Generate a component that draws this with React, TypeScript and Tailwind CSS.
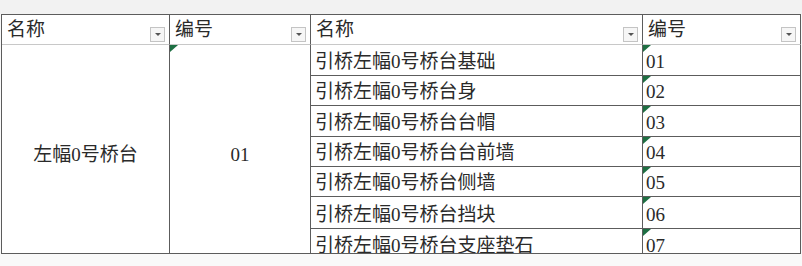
import React from 'react'

const rows = [
  { name: '引桥左幅0号桥台基础', code: '01' },
  { name: '引桥左幅0号桥台身', code: '02' },
  { name: '引桥左幅0号桥台台帽', code: '03' },
  { name: '引桥左幅0号桥台台前墙', code: '04' },
  { name: '引桥左幅0号桥台侧墙', code: '05' },
  { name: '引桥左幅0号桥台挡块', code: '06' },
  { name: '引桥左幅0号桥台支座垫石', code: '07' },
]

const font = { fontFamily: '"Liberation Serif", "Noto Sans CJK SC", serif' }

const FilterButton = () => (
  <div className="absolute right-[4px] bottom-[2px] w-[15px] h-[15px] border border-[#c4c4c4] bg-[#f6f6f6] flex items-center justify-center">
    <div className="w-0 h-0 border-l-[3px] border-r-[3px] border-t-[3px] border-l-transparent border-r-transparent border-t-[#555]" />
  </div>
)

const GreenMark = () => (
  <div className="absolute left-0 top-0 w-0 h-0 border-t-[7px] border-r-[8px] border-t-[#1e6f43] border-r-transparent" />
)

const HeaderCell = ({ label }: { label: string }) => (
  <div className="relative bg-white border-b border-b-[#c8c8c8] border-r border-r-[#5c5c5c] flex items-end pl-[5px] pb-[1px] text-[19px] leading-[26px] text-[#2a2a2a]">
    {label}
    <FilterButton />
  </div>
)

const App = () => {
  return (
    <div className="w-[802px] h-[266px] bg-[#f9f9f9] overflow-hidden" style={font}>
      <div className="h-[14px] bg-[#f2f2f2]" />
      <div className="ml-[1px] w-[800px] h-[240px] border-t border-l border-b border-[#5c5c5c] overflow-hidden bg-white">
        <div className="grid grid-cols-[168px_141px_332px_158px] grid-rows-[30px_31px_30px_31px_30px_30px_32px_31px]">
          <HeaderCell label="名称" />
          <HeaderCell label="编号" />
          <HeaderCell label="名称" />
          <HeaderCell label="编号" />

          <div className="row-span-7 col-start-1 row-start-2 border-r border-[#5c5c5c] flex items-center justify-center pt-[6px] text-[19px] text-[#2a2a2a]">
            左幅0号桥台
          </div>
          <div className="relative row-span-7 col-start-2 row-start-2 border-r border-[#5c5c5c] flex items-center justify-center pt-[6px] text-[19px] text-[#2a2a2a]">
            <GreenMark />
            01
          </div>

          {rows.map((row) => (
            <React.Fragment key={row.code}>
              <div className="col-start-3 border-r border-b border-[#5c5c5c] flex items-end pl-[4px] text-[19px] leading-[26px] text-[#2a2a2a] whitespace-nowrap">
                {row.name}
              </div>
              <div className="relative col-start-4 border-r border-b border-[#5c5c5c] flex items-end pl-[3px] text-[19px] leading-[26px] text-[#2a2a2a]">
                <GreenMark />
                {row.code}
              </div>
            </React.Fragment>
          ))}
        </div>
      </div>
    </div>
  )
}

export default App
